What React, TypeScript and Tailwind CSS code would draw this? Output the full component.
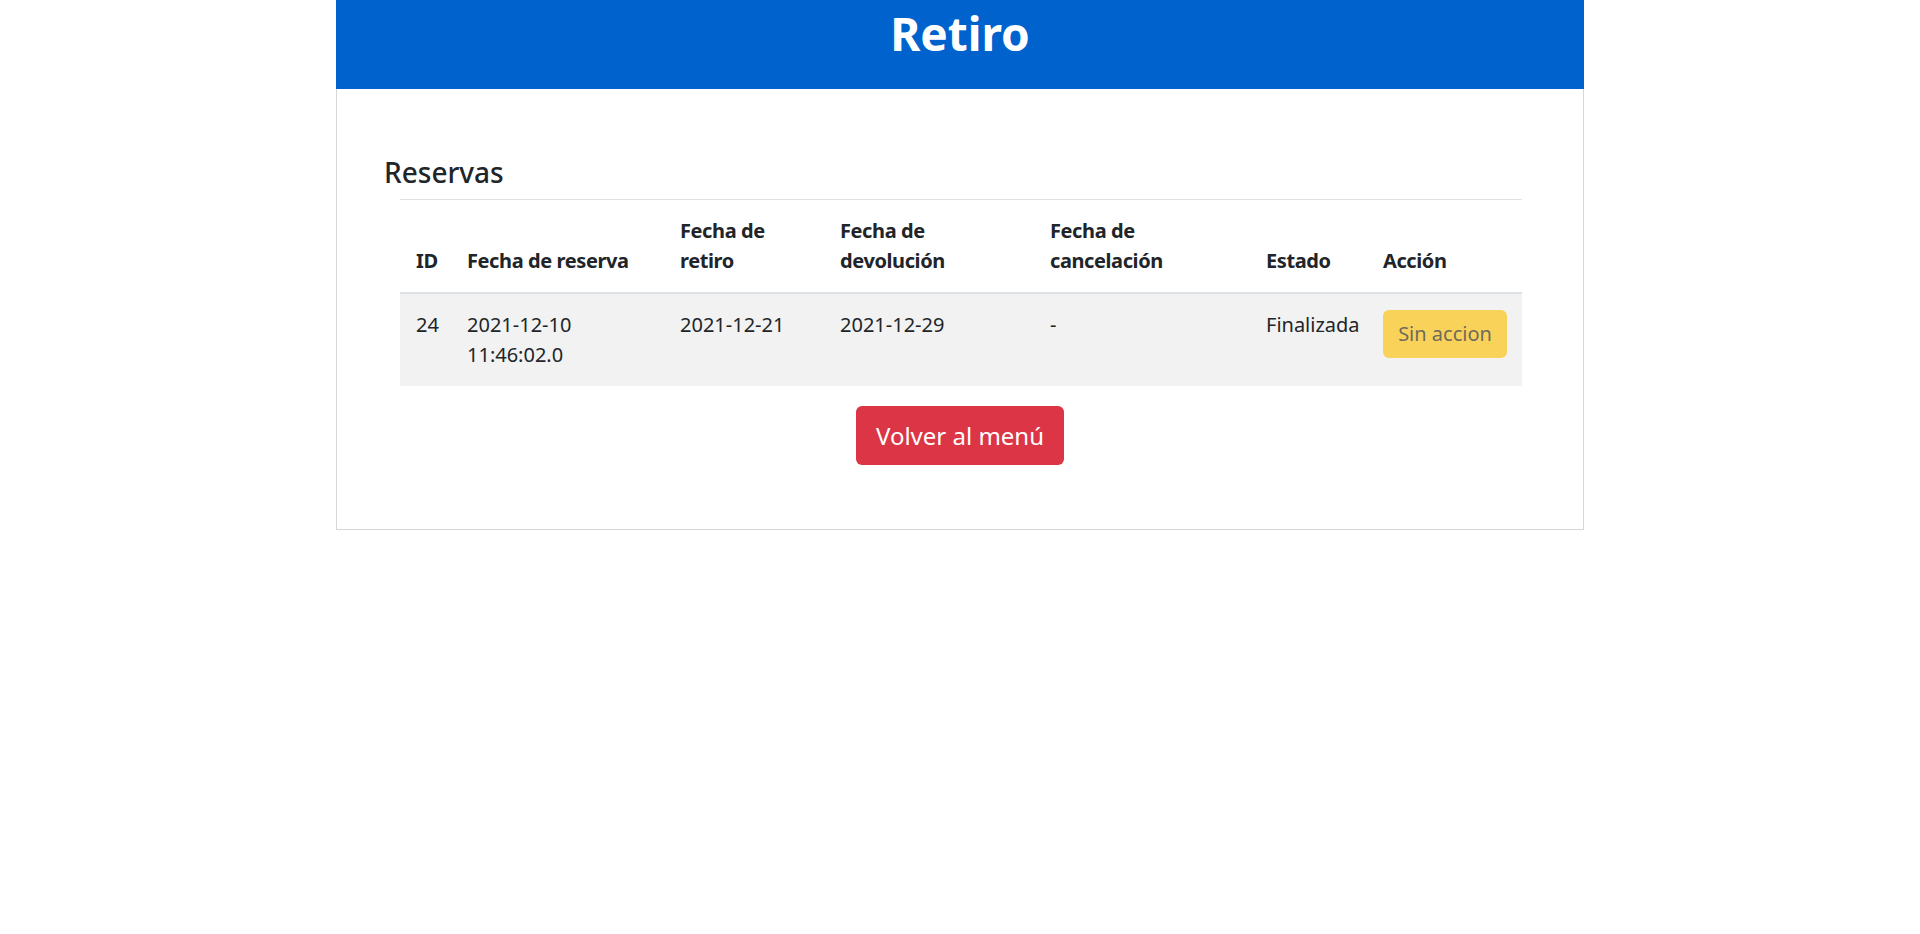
import React from "react";

const cols = [
  { label: ["ID"], w: "w-[51px]" },
  { label: ["Fecha de reserva"], w: "w-[213px]" },
  { label: ["Fecha de", "retiro"], w: "w-[160px]" },
  { label: ["Fecha de", "devolución"], w: "w-[210px]" },
  { label: ["Fecha de", "cancelación"], w: "w-[216px]" },
  { label: ["Estado"], w: "w-[117px]" },
  { label: ["Acción"], w: "w-[155px]" },
];

export default function App() {
  return (
    <div className="min-h-[934px] bg-white font-['Noto_Sans',sans-serif] text-[#212529]">
      <div className="mx-auto w-[1248px]">
        <div className="h-[89px] bg-[#0062cc] text-center">
          <h1 className="pt-[4px] text-[46px] font-bold leading-[58px] text-white">Retiro</h1>
        </div>
        <div className="border border-t-0 border-[#d6d6d6] px-[47px] pt-[66px] pb-[64px]">
          <h4 className="text-[28px] font-medium leading-[34px]">Reservas</h4>
          <div className="mt-[10px] px-[16px]">
            <table className="w-[1122px] table-fixed border-collapse text-left text-[20px] leading-[30px]">
              <thead>
                <tr>
                  {cols.map((c, i) => (
                    <th
                      key={i}
                      className={`${c.w} border-t border-b-2 border-[#dee2e6] p-4 align-bottom font-bold tracking-[-0.4px]`}
                    >
                      {c.label.map((l, j) => (
                        <div key={j}>{l}</div>
                      ))}
                    </th>
                  ))}
                </tr>
              </thead>
              <tbody>
                <tr className="bg-[#f2f2f2]">
                  <td className="p-4 align-top">24</td>
                  <td className="p-4 align-top">
                    <div>2021-12-10</div>
                    <div>11:46:02.0</div>
                  </td>
                  <td className="p-4 align-top">2021-12-21</td>
                  <td className="p-4 align-top">2021-12-29</td>
                  <td className="p-4 align-top">-</td>
                  <td className="p-4 align-top">Finalizada</td>
                  <td className="p-4 align-top">
                    <button
                      disabled
                      className="h-[48px] w-[124px] rounded-[6px] bg-[#f9d25a] text-[20px] leading-[30px] text-[#6f6a5a]"
                    >
                      Sin accion
                    </button>
                  </td>
                </tr>
              </tbody>
            </table>
          </div>
          <div className="mt-[20px] flex justify-center">
            <button className="h-[59px] rounded-[6px] bg-[#dc3545] px-[20px] text-[24px] leading-[36px] text-white">
              Volver al menú
            </button>
          </div>
        </div>
      </div>
    </div>
  );
}
